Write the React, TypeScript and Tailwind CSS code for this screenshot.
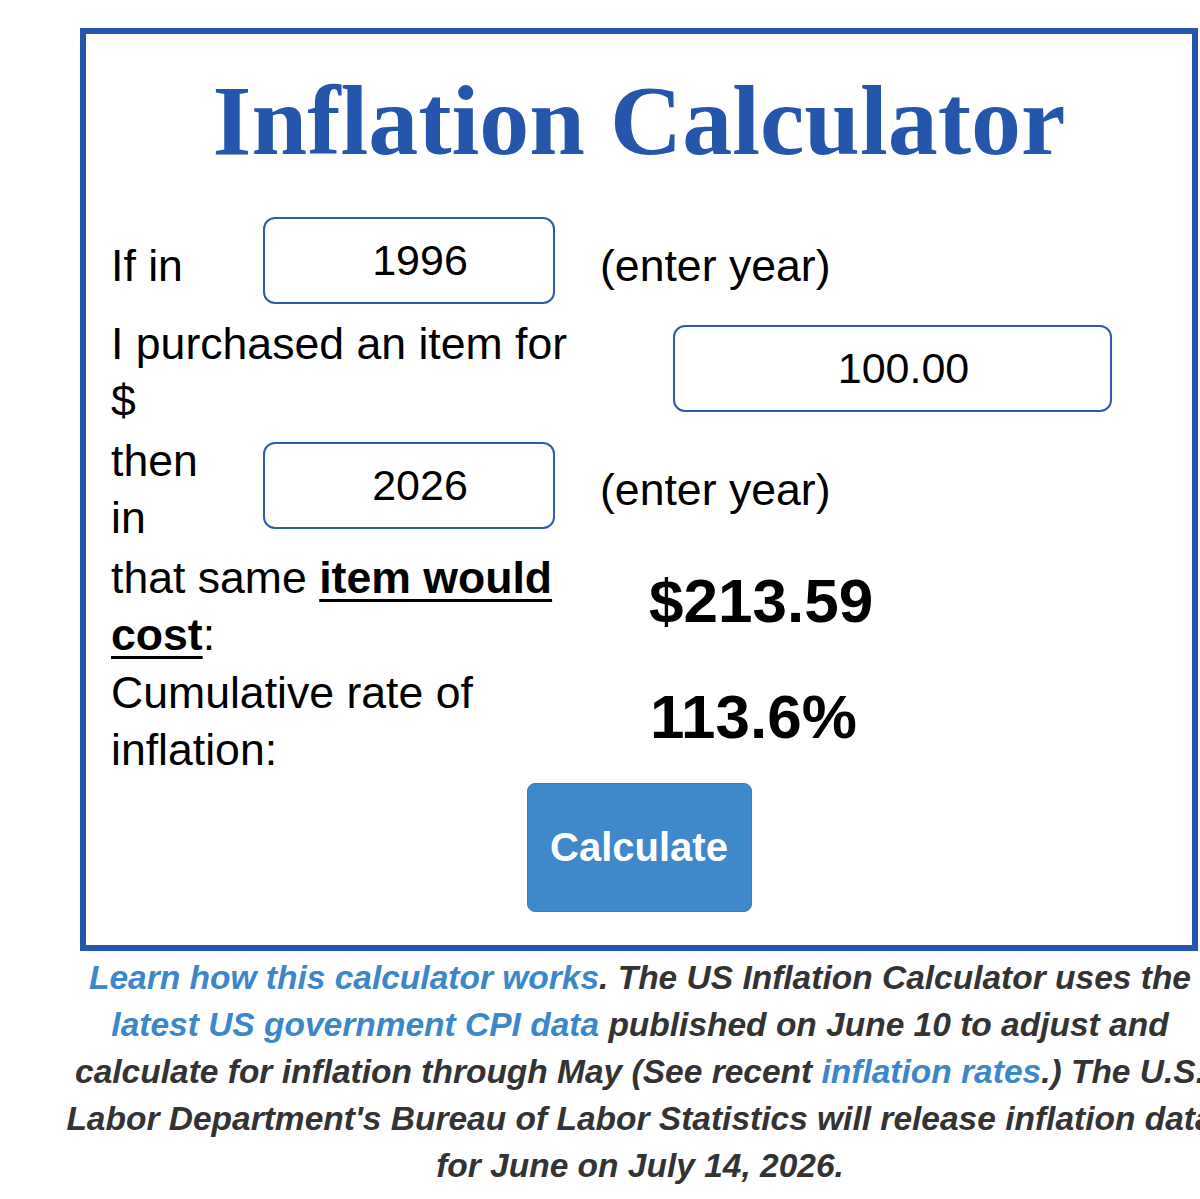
import React, { useState } from 'react';

const sans = { fontFamily: '"Liberation Sans", Arial, sans-serif' };

function YearInput({ value, onChange, width }: { value: string; onChange: (v: string) => void; width: string }) {
  return (
    <input
      value={value}
      onChange={(e) => onChange(e.target.value)}
      className={`${width} h-[87px] shrink-0 rounded-[12px] border-[2.5px] border-[#2d5cae] bg-white pl-[22px] text-center text-[43px] text-black outline-none`}
      style={sans}
    />
  );
}

export default function App() {
  const [fromYear, setFromYear] = useState('1996');
  const [amount, setAmount] = useState('100.00');
  const [toYear, setToYear] = useState('2026');

  return (
    <div className="min-h-[1199px] w-[1200px] overflow-hidden bg-white" style={sans}>
      <div className="ml-[80px] mt-[28px] flex h-[923px] w-[1118px] flex-col border-[6px] border-[#2456ac] pl-[25px] text-[44.6px] leading-[57px] text-black">
        <h1
          className="mt-[37px] -ml-[25px] text-center text-[100px] font-bold leading-none text-[#2456ac]"
          style={{ fontFamily: '"Liberation Serif", "Times New Roman", serif' }}
        >
          Inflation Calculator
        </h1>

        {/* year of purchase */}
        <div className="mt-[46px] flex h-[87px] items-center">
          <span className="mt-[10px] w-[120px] shrink-0">If in</span>
          <span className="w-[32px] shrink-0" />
          <YearInput value={fromYear} onChange={setFromYear} width="w-[292px]" />
          <span className="ml-[45px] mt-[10px]">(enter year)</span>
        </div>

        {/* price paid */}
        <div className="mt-[11px] flex items-center">
          <span className="w-[470px] shrink-0">I purchased an item for $</span>
          <span className="w-[92px] shrink-0" />
          <div className="-mt-[7px]">
            <YearInput value={amount} onChange={setAmount} width="w-[439px]" />
          </div>
        </div>

        {/* target year */}
        <div className="mt-[3px] flex items-center">
          <span className="w-[120px] shrink-0">then in</span>
          <span className="w-[32px] shrink-0" />
          <div className="-mt-[7px]">
            <YearInput value={toYear} onChange={setToYear} width="w-[292px]" />
          </div>
          <span className="ml-[45px]">(enter year)</span>
        </div>

        {/* results */}
        <div className="mt-[3px] flex items-center">
          <span className="w-[450px] shrink-0">
            that same{' '}
            <b className="underline decoration-[3px] underline-offset-[6px]">item would cost</b>:
          </span>
          <span className="ml-[88px] -mt-[10px] text-[62px] font-bold leading-[70px]">$213.59</span>
        </div>

        <div className="mt-[1px] flex items-center">
          <span className="w-[450px] shrink-0">Cumulative rate of inflation:</span>
          <span className="ml-[89px] -mt-[8px] text-[62px] font-bold leading-[70px]">113.6%</span>
        </div>

        <div className="-ml-[25px] mt-[5px] flex justify-center">
          <button
            type="button"
            className="h-[129px] w-[225px] rounded-[8px] border border-[#3a7cbf] bg-[#3f88c9] text-[40px] font-bold text-white"
          >
            Calculate
          </button>
        </div>
      </div>

      <p className="ml-[55px] mt-[3px] w-[1170px] text-center text-[33.5px] font-bold italic leading-[47px] text-[#333333]">
        <a className="text-[#3b87c9]">Learn how this calculator works</a>. The US Inflation Calculator uses the{' '}
        <a className="text-[#3b87c9]">latest US government CPI data</a> published on June 10 to adjust and calculate for
        inflation through May (See recent <a className="text-[#3b87c9]">inflation rates</a>.) The U.S. Labor
        Department's Bureau of Labor Statistics will release inflation data for June on July 14, 2026.
      </p>
    </div>
  );
}
